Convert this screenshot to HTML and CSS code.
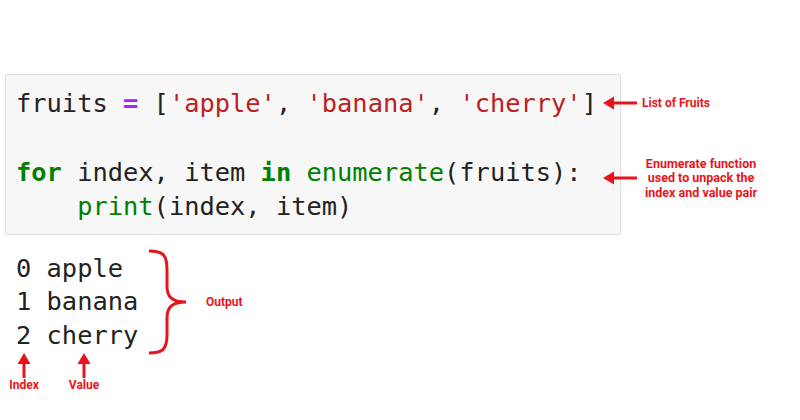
FILE: index.html
```html
<!DOCTYPE html>
<html>
<head>
<meta charset="utf-8">
<link rel="stylesheet" href="styles.css">
</head>
<body>
<div class="page">
  <div class="top-row">
    <div class="code-cell">
      <div class="line">fruits <span class="op">=</span> [<span class="str">'apple'</span>, <span class="str">'banana'</span>, <span class="str">'cherry'</span>]</div>
      <div class="line"> </div>
      <div class="line"><span class="kw">for</span> index, item <span class="kw">in</span> <span class="bi">enumerate</span>(fruits):</div>
      <div class="line">    <span class="bi">print</span>(index, item)</div>
    </div>
    <div class="notes">
      <div class="note note-1">
        <svg class="arrow-left" width="34" height="14" viewBox="0 0 34 14"><polygon points="0,7 11,0.5 11,13.5" fill="#e8141b"/><rect x="10" y="5.5" width="24" height="3" fill="#e8141b"/></svg>
        <span class="label">List of Fruits</span>
      </div>
      <div class="note note-2">
        <svg class="arrow-left" width="34" height="14" viewBox="0 0 34 14"><polygon points="0,7 11,0.5 11,13.5" fill="#e8141b"/><rect x="10" y="5.5" width="24" height="3" fill="#e8141b"/></svg>
        <span class="label label-multi">Enumerate function<br>used to unpack the<br>index and value pair</span>
      </div>
    </div>
  </div>
  <div class="output-row">
    <div class="output">
      <div class="oline">0 apple</div>
      <div class="oline">1 banana</div>
      <div class="oline">2 cherry</div>
    </div>
    <svg class="brace" width="40" height="106" viewBox="0 0 40 106"><path d="M1,2 C14,2 19,5 19,20 L19,37 C19,48 24,53 38,53 C24,53 19,58 19,69 L19,86 C19,101 14,104 1,104" fill="none" stroke="#e8141b" stroke-width="3"/></svg>
    <span class="label">Output</span>
  </div>
  <div class="pointers">
    <div class="pointer">
      <svg width="14" height="25" viewBox="0 0 14 25"><polygon points="7,0 0.5,11 13.5,11" fill="#e8141b"/><rect x="5.5" y="10" width="3" height="15" fill="#e8141b"/></svg>
      <span class="label">Index</span>
    </div>
    <div class="pointer">
      <svg width="14" height="25" viewBox="0 0 14 25"><polygon points="7,0 0.5,11 13.5,11" fill="#e8141b"/><rect x="5.5" y="10" width="3" height="15" fill="#e8141b"/></svg>
      <span class="label">Value</span>
    </div>
  </div>
</div>
</body>
</html>
```
FILE: styles.css
```css
html, body {
  margin: 0;
  padding: 0;
  background: #ffffff;
}
body {
  width: 800px;
  height: 420px;
  overflow: hidden;
  font-family: Roboto, "Liberation Sans", sans-serif;
}
.page {
  padding: 74px 0 0 5px;
}
.top-row {
  display: flex;
  align-items: flex-start;
}
.code-cell {
  width: 616px;
  box-sizing: border-box;
  background: #f7f7f7;
  border: 1px solid #dddddd;
  border-radius: 2px;
  padding: 11px 10px;
  font-family: "DejaVu Sans Mono", "Liberation Mono", monospace;
  font-size: 25.4px;
  line-height: 34.3px;
  color: #222222;
  flex-shrink: 0;
}
.line {
  white-space: pre;
  height: 34.3px;
}
.op { color: #aa22ff; font-weight: bold; }
.str { color: #ba2121; }
.kw { color: #008000; font-weight: bold; }
.bi { color: #008000; }

.notes {
  margin-left: -18px;
  padding-top: 12px;
  display: flex;
  flex-direction: column;
}
.note {
  display: flex;
  align-items: center;
  gap: 5px;
}
.note-1 {
  height: 34.3px;
}
.note-2 {
  margin-top: 35px;
  height: 46px;
  gap: 8px;
}
.arrow-left { flex-shrink: 0; }
.label {
  color: #e8141b;
  font-weight: bold;
  font-size: 12px;
  line-height: 14px;
  white-space: nowrap;
}
.label-multi {
  font-size: 12.5px;
  line-height: 14.5px;
  text-align: center;
}

.output-row {
  margin-top: 14px;
  display: flex;
  align-items: center;
}
.output {
  padding-left: 11px;
  font-family: "DejaVu Sans Mono", "Liberation Mono", monospace;
  font-size: 25.4px;
  line-height: 33.5px;
  color: #222222;
  width: 132px;
}
.oline {
  white-space: pre;
  height: 33.5px;
}
.brace {
  flex-shrink: 0;
}
.output-row .label {
  margin-left: 18px;
}

.pointers {
  margin-top: -2px;
  display: flex;
  gap: 22px;
}
.pointer {
  width: 38px;
  display: flex;
  flex-direction: column;
  align-items: center;
}
```
